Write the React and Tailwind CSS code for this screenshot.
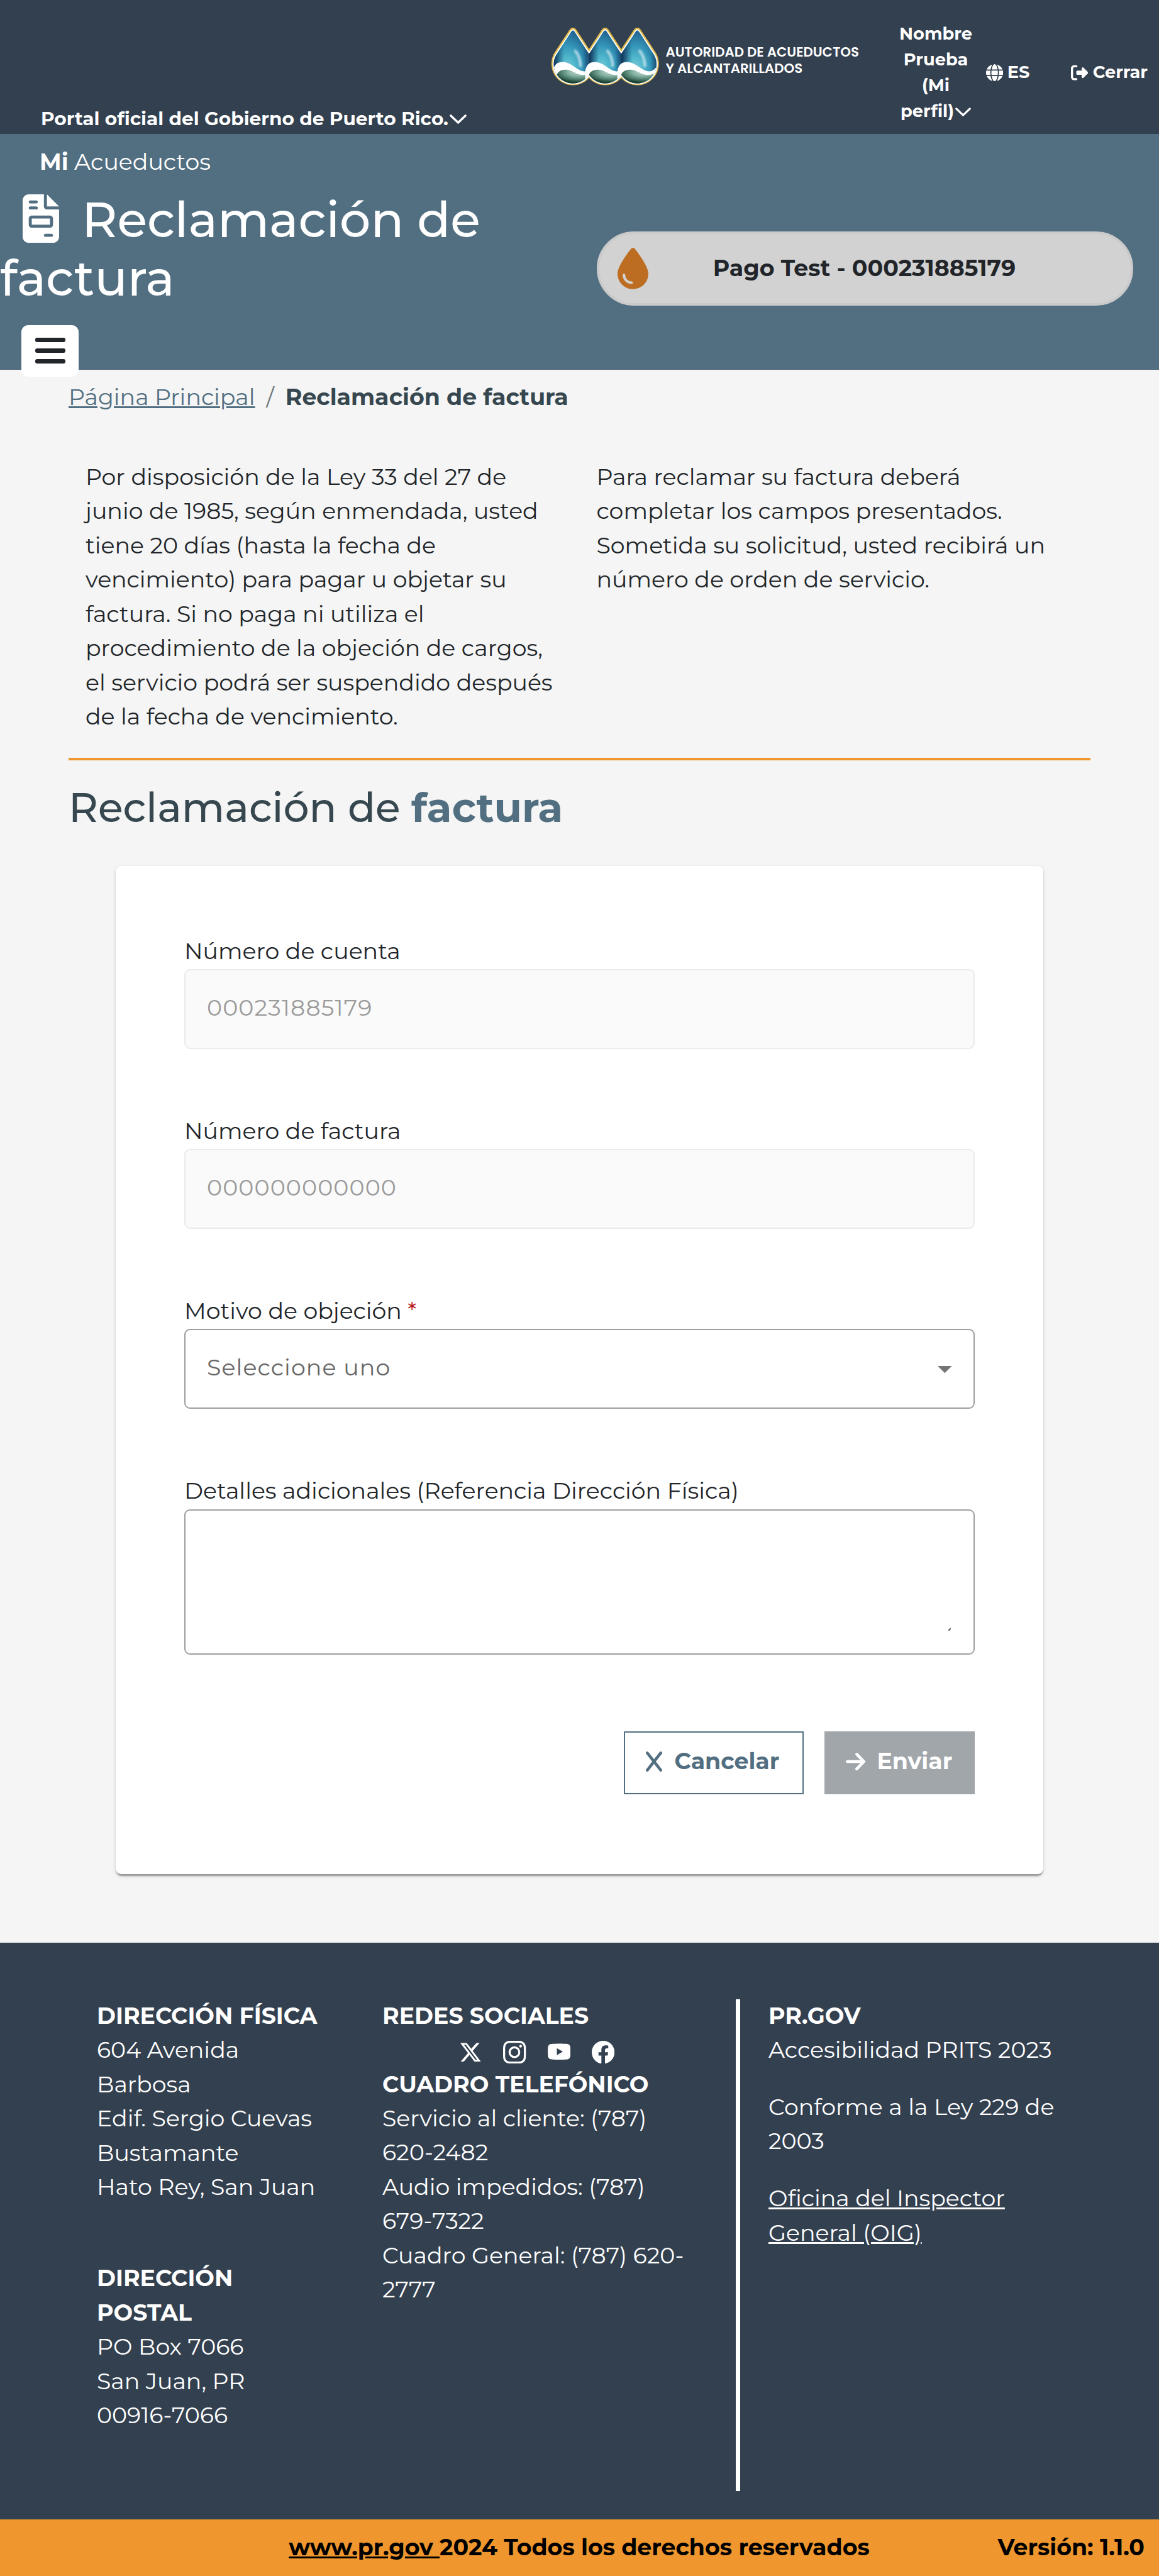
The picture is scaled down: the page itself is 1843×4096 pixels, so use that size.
import React from "react";
import { FaFileInvoice, FaGlobe, FaRightFromBracket, FaDroplet, FaXTwitter } from "react-icons/fa6";
import { BsInstagram, BsYoutube, BsFacebook } from "react-icons/bs";

function Chevron({ className }) {
  return (
    <svg viewBox="0 0 36 20" className={className} fill="none" stroke="currentColor" strokeWidth="4.6" strokeLinecap="round" strokeLinejoin="round">
      <path d="M2.6 2.6 18 17.4 33.4 2.6" />
    </svg>
  );
}

function Logo() {
  const outer = "M-7 4Q0-4.500 7 4L39.700 54A45.300 45.300 0 1 1-39.700 54Z";
  const white = "M-4.800 6.500Q0 0 4.800 6.500L37.300 55.500A42.900 42.900 0 1 1-37.300 55.500Z";
  const inner = "M-3 7.500Q0 4.200 3 7.500L35.400 57.500A40.400 40.400 0 1 1-35.400 57.500Z";
  const centers = [46.3, 114, 181.7];
  return (
    <svg viewBox="0 0 228 123" className="h-[93px] w-[172.500px]">
      <defs>
        <radialGradient id="water" cx="0.4" cy="0.74" r="0.7">
          <stop offset="0" stopColor="#86cdd9" />
          <stop offset="0.3" stopColor="#53b9cd" />
          <stop offset="0.62" stopColor="#3496b9" />
          <stop offset="1" stopColor="#1f5f8c" />
        </radialGradient>
        <linearGradient id="edge" x1="0" x2="1" y1="0" y2="0">
          <stop offset="0" stopColor="#0d2a4d" stopOpacity="0.95" />
          <stop offset="0.3" stopColor="#123a62" stopOpacity="0" />
          <stop offset="0.82" stopColor="#123a62" stopOpacity="0" />
          <stop offset="1" stopColor="#0d2a4d" stopOpacity="0.55" />
        </linearGradient>
        <radialGradient id="land" cx="0.66" cy="0.15" r="0.75">
          <stop offset="0" stopColor="#c4ddd4" />
          <stop offset="0.45" stopColor="#7fad9e" />
          <stop offset="0.8" stopColor="#41705f" />
          <stop offset="1" stopColor="#1c3f31" />
        </radialGradient>
        <filter id="soft" x="-50%" y="-50%" width="200%" height="200%"><feGaussianBlur stdDeviation="1.8" /></filter>
        <clipPath id="drops">
          {centers.map((c) => <path key={c} d={inner} transform={`translate(${c} 0)`} />)}
        </clipPath>
      </defs>
      <g fill="#e0b84a">{centers.map((c) => <path key={c} d={outer} transform={`translate(${c} 0)`} />)}</g>
      <g fill="#fff">{centers.map((c) => <path key={c} d={white} transform={`translate(${c} 0)`} />)}</g>
      <g clipPath="url(#drops)">
        {centers.map((c, i) => (
          <g key={c} transform={`translate(${c} 0)`}>
            <rect x={i === 0 ? -41 : -33.85} y="0" width={i === 1 ? 67.7 : 74.85} height="122" fill="url(#water)" />
            <rect x={i === 0 ? -41 : -33.85} y="0" width={i === 1 ? 67.7 : 74.85} height="122" fill="url(#edge)" />
            <path d="M5 49Q15 60 16 80" fill="none" stroke="#e8f6fa" strokeOpacity="0.65" strokeWidth="6" strokeLinecap="round" filter="url(#soft)" />
          </g>
        ))}
        {centers.map((c) => (
          <g key={c} transform={`translate(${c} 0)`}>
            <path d="M-42 92C-39 74-30 72-20 72.300C-2 73 8 91 25 91.800C33 91.800 38 86 42 80V123H-42Z" fill="#fff" />
            <path d="M-34 99.500C-32 93-26 88.500-16 88.300C-2 88 6 98 19 99.400C25 100 30 99 34 96.500C32 108 18 118 0 118C-16 118-30 108-34 99.500Z" fill="url(#land)" />
          </g>
        ))}
      </g>
    </svg>
  );
}

function Header() {
  return (
    <header className="flex h-[213px] bg-[#33404f] font-bold text-white">
      <div className="flex w-[876px] items-end pb-[2px] pl-[65px] text-[29.620px] leading-[43.600px]">
        <span className="whitespace-nowrap">Portal oficial del Gobierno de Puerto Rico.</span>
        <Chevron className="mb-[14px] ml-[2px] h-[15px] w-[27px]" />
      </div>
      <div className="flex w-[540px] items-start gap-[10px] pt-[43.500px]">
        <Logo />
        <div className="pt-[26.500px] font-['Poppins','Montserrat',sans-serif] text-[21.300px] leading-[26.200px] font-semibold whitespace-nowrap">
          AUTORIDAD DE ACUEDUCTOS
          <br />Y ALCANTARILLADOS
        </div>
      </div>
      <div className="w-[144px] pt-[34px] text-center text-[27.240px] leading-[40.850px] whitespace-nowrap">
        Nombre
        <br />Prueba
        <br />(Mi
        <br />perfil)<Chevron className="ml-[2px] inline h-[14px] w-[25px]" />
      </div>
      <div className="flex items-start pt-[95px] pl-[8px] text-[27.240px] leading-[40.850px]">
        <div className="flex w-[135px] items-center gap-[6.500px]">
          <FaGlobe className="size-[27.240px]" />
          ES
        </div>
        <div className="flex items-center gap-[7.500px]">
          <FaRightFromBracket className="size-[27.240px]" />
          Cerrar
        </div>
      </div>
    </header>
  );
}

function Hero() {
  return (
    <section className="flex h-[375px] bg-[#526f81] text-white">
      <div className="flex w-[949px] flex-col items-start pt-[17px]">
        <div className="pl-[63px] text-[36.320px] leading-[54.480px]"><b>Mi</b> Acueductos</div>
        <h1 className="mt-[19.500px] text-[77.700px] leading-[92.600px] font-medium whitespace-nowrap">
          <span className="flex items-center">
            <FaFileInvoice className="mt-[-5px] mr-[36px] ml-[36px] h-[77.200px] w-[58px]" />
            Reclamación de
          </span>
          factura
        </h1>
        <button className="mt-[27.500px] ml-[34px] flex h-[82px] w-[91px] shrink-0 flex-col items-center justify-center gap-[10px] rounded-[11px] bg-white">
          <i className="h-[7px] w-[48px] rounded-[3px] bg-[#212529]" />
          <i className="h-[7px] w-[48px] rounded-[3px] bg-[#212529]" />
          <i className="h-[7px] w-[48px] rounded-[3px] bg-[#212529]" />
        </button>
      </div>
      <div className="mt-[154.500px] flex h-[118px] w-[853px] items-center rounded-full border-[4.500px] border-[#cacaca] bg-[#d2d2d2] pr-[80px] pl-[29px] text-[#212529]">
        <FaDroplet className="h-[66px] w-[49px] text-[#bd6d22]" />
        <div className="flex-1 text-center text-[36.320px] font-bold">Pago Test - 000231885179</div>
      </div>
    </section>
  );
}

function Field({ label, required, children }) {
  return (
    <div className="mb-[103.200px]">
      <div className="mb-[2px] h-[54.500px] text-[#212529]">
        {label}
        {required && <span className="text-[#b3151b]"> *</span>}
      </div>
      {children}
    </div>
  );
}

function Input({ children }) {
  return (
    <div className="flex h-[126.500px] items-center rounded-[9px] border-2 border-[#ebebeb] bg-[#fafafa] pb-[4px] pl-[34px] tracking-[1.130px] text-[#9a9a9a]">{children}</div>
  );
}

function Claim() {
  return (
    <main className="px-[109px] pt-[16px] text-[36.320px] leading-[54.480px] text-[#212529]">
      <nav className="flex gap-[18px]">
        <a className="text-[#526f81] underline">Página Principal</a>
        <span className="text-[#6c757d]">/</span>
        <b className="text-[#36474f]">Reclamación de factura</b>
      </nav>
      <div className="mt-[72.500px] grid grid-cols-2">
        <p className="px-[27px]">
          Por disposición de la Ley 33 del 27 de junio de 1985, según enmendada, usted tiene 20 días (hasta la fecha de vencimiento) para pagar u objetar su factura. Si no paga ni utiliza el procedimiento de la objeción de cargos, el servicio podrá ser suspendido después de la fecha de vencimiento.
        </p>
        <p className="px-[27px]">
          Para reclamar su factura deberá completar los campos presentados. Sometida su solicitud, usted recibirá un número de orden de servicio.
        </p>
      </div>
      <div className="mt-[38px] h-[4.500px] bg-[#ef962e]" />
      <h2 className="mt-[37px] text-[64.700px] leading-[76.200px] font-medium text-[#36474f]">
        Reclamación de <b className="text-[#526f81]">factura</b>
      </h2>
      <div className="mt-[54px] mr-[75px] mb-[109px] ml-[75px] h-[1603px] rounded-[9px] bg-white px-[109px] pt-[108px] shadow-[0_4.500px_2.300px_-2.300px_rgba(0,0,0,0.2),0_2.300px_2.300px_rgba(0,0,0,0.14),0_2.300px_6.800px_rgba(0,0,0,0.12)]">
        <Field label="Número de cuenta"><Input>000231885179</Input></Field>
        <Field label="Número de factura"><Input>000000000000</Input></Field>
        <Field label="Motivo de objeción" required>
          <div className="flex h-[126.500px] items-center justify-between rounded-[9px] border-2 border-[#9e9e9e] pr-[34px] pb-[4px] pl-[34px] tracking-[1.130px] text-[#666]">
            Seleccione uno
            <svg viewBox="0 0 10 5" className="mt-[5px] h-[11.300px] w-[22.700px] fill-[#757575]"><path d="M0 0h10L5 5z" /></svg>
          </div>
        </Field>
        <Field label="Detalles adicionales (Referencia Dirección Física)">
          <div className="flex h-[231px] items-end justify-end rounded-[9px] border-2 border-[#9e9e9e] pr-[36px] pb-[36px]">
            <svg viewBox="0 0 5 5" className="size-[4px] fill-[#616161]"><path d="M0 3 3 0h2v2L2 5H0z" /></svg>
          </div>
        </Field>
        <div className="mt-[122px] flex justify-end gap-[33.500px] font-bold">
          <button className="flex h-[100px] w-[286px] items-center gap-[20px] border-2 border-[#526f81] pb-[4px] pl-[33px] text-[#526f81]">
            <svg viewBox="0 0 34 42" className="h-[32px] w-[26px]" fill="none" stroke="currentColor" strokeWidth="6" strokeLinecap="round"><path d="M3 3 31 39M31 3 3 39" /></svg>
            Cancelar
          </button>
          <button className="flex h-[100px] w-[239px] items-center gap-[18.500px] bg-[#a1a6aa] pb-[4px] pl-[34px] text-white">
            <svg viewBox="0 0 40 36" className="h-[28px] w-[31px]" fill="none" stroke="currentColor" strokeWidth="6" strokeLinecap="round" strokeLinejoin="round"><path d="M3 18H36M22.500 3 37 18 22.500 33" /></svg>
            Enviar
          </button>
        </div>
      </div>
    </main>
  );
}

function Footer() {
  return (
    <footer className="text-[36.320px] leading-[54.480px]">
      <div className="flex h-[917px] bg-[#33404f] pt-[89px] pl-[154px] whitespace-nowrap text-white">
        <div className="w-[454px]">
          <b>DIRECCIÓN FÍSICA</b>
          <br />604 Avenida
          <br />Barbosa
          <br />Edif. Sergio Cuevas
          <br />Bustamante
          <br />Hato Rey, San Juan
          <div className="mt-[91px]">
            <b>DIRECCIÓN<br />POSTAL</b>
            <br />PO Box 7066
            <br />San Juan, PR
            <br />00916-7066
          </div>
        </div>
        <div className="w-[562px]">
          <b>REDES SOCIALES</b>
          <div className="flex h-[54.480px] items-center gap-[34px] pt-[8px] pl-[122px]">
            <FaXTwitter className="size-[36.300px]" />
            <BsInstagram className="size-[36.300px]" />
            <BsYoutube className="size-[36.300px]" />
            <BsFacebook className="size-[36.300px]" />
          </div>
          <b>CUADRO TELEFÓNICO</b>
          <br />Servicio al cliente: (787)
          <br />620-2482
          <br />Audio impedidos: (787)
          <br />679-7322
          <br />Cuadro General: (787) 620-
          <br />2777
        </div>
        <div className="mt-[1px] mr-[45px] h-[782px] w-[7px] bg-white" />
        <div>
          <b>PR.GOV</b>
          <p>Accesibilidad PRITS 2023</p>
          <p className="mt-[36.300px]">Conforme a la Ley 229 de<br />2003</p>
          <p className="mt-[36.300px] underline">Oficina del Inspector<br />General (OIG)</p>
        </div>
      </div>
      <div className="grid h-[90.500px] grid-cols-[1fr_auto_1fr] items-center bg-[#ef962e] pr-[23px] pb-[1px] font-bold text-black">
        <span />
        <span className="pl-[22px]"><u>www.pr.gov </u>2024 Todos los derechos reservados</span>
        <span className="text-right">Versión: 1.1.0</span>
      </div>
    </footer>
  );
}

export default function App() {
  return (
    <div className="h-[4096px] w-[1843px] overflow-hidden bg-[#f5f5f5] font-['Montserrat','Inter',sans-serif]">
      <Header />
      <Hero />
      <Claim />
      <Footer />
    </div>
  );
}
